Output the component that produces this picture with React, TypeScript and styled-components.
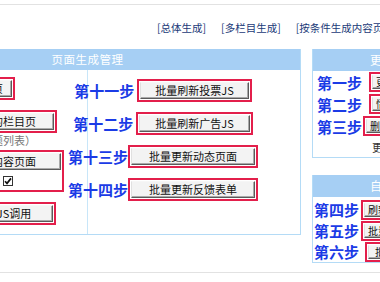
import React from "react";
import styled, { createGlobalStyle } from "styled-components";

const Global = createGlobalStyle`
  html, body { margin: 0; padding: 0; background: #fff; }
  body {
    width: 380px; height: 282px; overflow: hidden;
    font-family: "Noto Sans CJK SC", "Noto Sans", sans-serif;
  }
`;

const Page = styled.div`
  width: 380px;
  height: 282px;
  overflow: hidden;
  display: flex;
  flex-direction: column;
`;

const Rule = styled.div<{ $top: number }>`
  height: 1px;
  flex: none;
  background: #e2e2e2;
  margin-top: ${(p) => p.$top}px;
  width: 380px;
`;

const LinkBar = styled.div`
  display: flex;
  gap: 15px;
  padding-left: 157px;
  margin-top: 16px;
  height: 13px;
  line-height: 13px;
  font-size: 10.5px;
  color: #1b3a78;
  white-space: nowrap;
`;

const Link = styled.span`
  color: #1b3a78;
`;

const Main = styled.div`
  display: flex;
  align-items: flex-start;
  gap: 11px;
  margin-left: -126px;
  margin-top: 15px;
  flex: none;
`;

const Panel = styled.div`
  width: 427px;
  flex: none;
  box-sizing: border-box;
  border: 1px solid #b4dbf6;
  border-top: 0;
`;

const Head = styled.div`
  height: 21px;
  line-height: 21px;
  background: #a6cff4;
  color: #fff;
  font-size: 11.5px;
  letter-spacing: 0.5px;
  text-align: center;
  white-space: nowrap;
  overflow: hidden;
`;

const PanelBody = styled.div`
  display: grid;
  grid-template-columns: 212px 213px;
`;

const LeftCol = styled.div`
  display: flex;
  flex-direction: column;
  align-items: center;
  padding: 7px 0 9px;
`;

const RightCol = styled.div`
  border-left: 1px solid #c8e6f9;
  display: flex;
  flex-direction: column;
  align-items: center;
  gap: 10px;
  padding: 9px 62px 0 0;
`;

const StepRow = styled.div<{ $gap: number }>`
  display: flex;
  align-items: center;
  justify-content: center;
  gap: ${(p) => p.$gap}px;
  white-space: nowrap;
`;

const Step = styled.span`
  font-family: "Noto Sans CJK SC", sans-serif;
  font-weight: 700;
  font-size: 15px;
  line-height: 1;
  color: #1b3be6;
  white-space: nowrap;
  flex: none;
`;

const Mark = styled.div<{ $mt?: number; $start?: boolean }>`
  display: inline-flex;
  flex-direction: column;
  align-items: ${(p) => (p.$start ? "flex-start" : "center")};
  border: 2px solid #e31f4b;
  padding: 1px;
  background: #fff;
  margin-top: ${(p) => p.$mt ?? 0}px;
  flex: none;
`;

const Btn = styled.div<{ $pad?: number; $small?: boolean }>`
  box-sizing: border-box;
  height: ${(p) => (p.$small ? 14 : 17)}px;
  padding: 0 ${(p) => p.$pad ?? 17}px;
  font-size: ${(p) => (p.$small ? 10 : 11)}px;
  line-height: 1;
  color: #111;
  background: #f3f3f3;
  border: 1px solid;
  border-color: #f6f6f6 #5a5a5a #5a5a5a #e0e0e0;
  box-shadow: inset -1px -1px 0 #a9a9a9;
  display: flex;
  align-items: center;
  justify-content: center;
  white-space: nowrap;
  align-self: stretch;
`;

const Note = styled.div`
  font-size: 11px;
  line-height: 13px;
  height: 13px;
  color: #777;
  white-space: nowrap;
  margin-top: 1px;
`;

const CheckRow = styled.label`
  display: flex;
  align-items: center;
  gap: 3px;
  margin: 4px 0 1px;
  height: 14px;
  font-size: 11px;
  color: #222;
  white-space: nowrap;
`;

const Check = styled.span`
  box-sizing: border-box;
  width: 10px;
  height: 10px;
  border: 1px solid #333;
  background: #fff;
  display: inline-flex;
  align-items: center;
  justify-content: center;
`;

const Side = styled.div`
  display: flex;
  flex-direction: column;
  gap: 17px;
  width: 164px;
  flex: none;
`;

const Box = styled.div`
  box-sizing: border-box;
  border: 1px solid #b4dbf6;
  border-top: 0;
  display: flex;
  flex-direction: column;
  background: #fff;
`;

const BoxHead = styled(Head)`
  height: 22px;
  line-height: 22px;
  font-size: 12px;
  letter-spacing: 0;
`;

const SideRows = styled.div<{ $padTop: number }>`
  display: flex;
  flex-direction: column;
  padding-top: ${(p) => p.$padTop}px;
`;

const SideRow = styled.div<{ $h: number; $indent: number; $gap: number }>`
  height: ${(p) => p.$h}px;
  display: flex;
  align-items: center;
  gap: ${(p) => p.$gap}px;
  padding-left: ${(p) => p.$indent}px;
  white-space: nowrap;
`;

const SideNote = styled.div`
  height: 20px;
  line-height: 20px;
  text-align: center;
  font-size: 11px;
  color: #333;
`;

type SRow = { step: string; label: string; gap: number; pad?: number };

const panel1: SRow[] = [
  { step: "第一步", label: "更新所有栏目", gap: 7 },
  { step: "第二步", label: "情况统计更新", gap: 7 },
  { step: "第三步", label: "删除过期文件", gap: 1 },
];

const panel2: SRow[] = [
  { step: "第四步", label: "刷新栏目列表", gap: 2 },
  { step: "第五步", label: "批量生成专题", gap: 2 },
  { step: "第六步", label: "批量生成地图", gap: 6, pad: 6 },
];

const steps = [
  { step: "第十一步", label: "批量刷新投票JS", gap: 3, pad: 14 },
  { step: "第十二步", label: "批量刷新广告JS", gap: 3, pad: 15 },
  { step: "第十三步", label: "批量更新动态页面", gap: 0, pad: 17 },
  { step: "第十四步", label: "批量更新反馈表单", gap: 0, pad: 17 },
];

export default function App() {
  return (
    <Page>
      <Global />
      <Rule $top={4} />
      <LinkBar>
        <Link>[总体生成]</Link>
        <Link>[多栏目生成]</Link>
        <Link>[按条件生成内容页面]</Link>
      </LinkBar>
      <Main>
        <Panel>
          <Head>页面生成管理</Head>
          <PanelBody>
            <LeftCol>
              <Mark>
                <Btn $pad={8}>生成首页</Btn>
              </Mark>
              <Mark $mt={10}>
                <Btn>批量生成所有的栏目页</Btn>
              </Mark>
              <Note>（包括生成专题列表）</Note>
              <Mark $mt={3} $start>
                <Btn $pad={24}>批量生成所有内容页面</Btn>
                <CheckRow>
                  仅生成未生成的页面
                  <Check>
                    <svg width="8" height="8" viewBox="0 0 8 8">
                      <path d="M1 4.2 L3 6.4 L7 1.4" stroke="#111" strokeWidth="1.7" fill="none" />
                    </svg>
                  </Check>
                </CheckRow>
              </Mark>
              <Mark $mt={10}>
                <Btn $pad={21}>批量生成全站JS调用</Btn>
              </Mark>
            </LeftCol>
            <RightCol>
              {steps.map((s) => (
                <StepRow key={s.step} $gap={s.gap}>
                  <Step>{s.step}</Step>
                  <Mark>
                    <Btn $pad={s.pad}>{s.label}</Btn>
                  </Mark>
                </StepRow>
              ))}
            </RightCol>
          </PanelBody>
        </Panel>
        <Side>
          <Box>
            <BoxHead>更新全站</BoxHead>
            <SideRows $padTop={0}>
              {panel1.map((r) => (
                <SideRow key={r.step} $h={22} $indent={4} $gap={r.gap}>
                  <Step>{r.step}</Step>
                  <Mark>
                    <Btn $small $pad={r.pad ?? 3}>{r.label}</Btn>
                  </Mark>
                </SideRow>
              ))}
            </SideRows>
            <SideNote>更新说明</SideNote>
          </Box>
          <Box>
            <BoxHead>自动生成</BoxHead>
            <SideRows $padTop={2}>
              {panel2.map((r) => (
                <SideRow key={r.step} $h={21} $indent={1} $gap={r.gap}>
                  <Step>{r.step}</Step>
                  <Mark>
                    <Btn $small $pad={r.pad ?? 3}>{r.label}</Btn>
                  </Mark>
                </SideRow>
              ))}
            </SideRows>
          </Box>
        </Side>
      </Main>
      <Rule $top={9} />
    </Page>
  );
}
